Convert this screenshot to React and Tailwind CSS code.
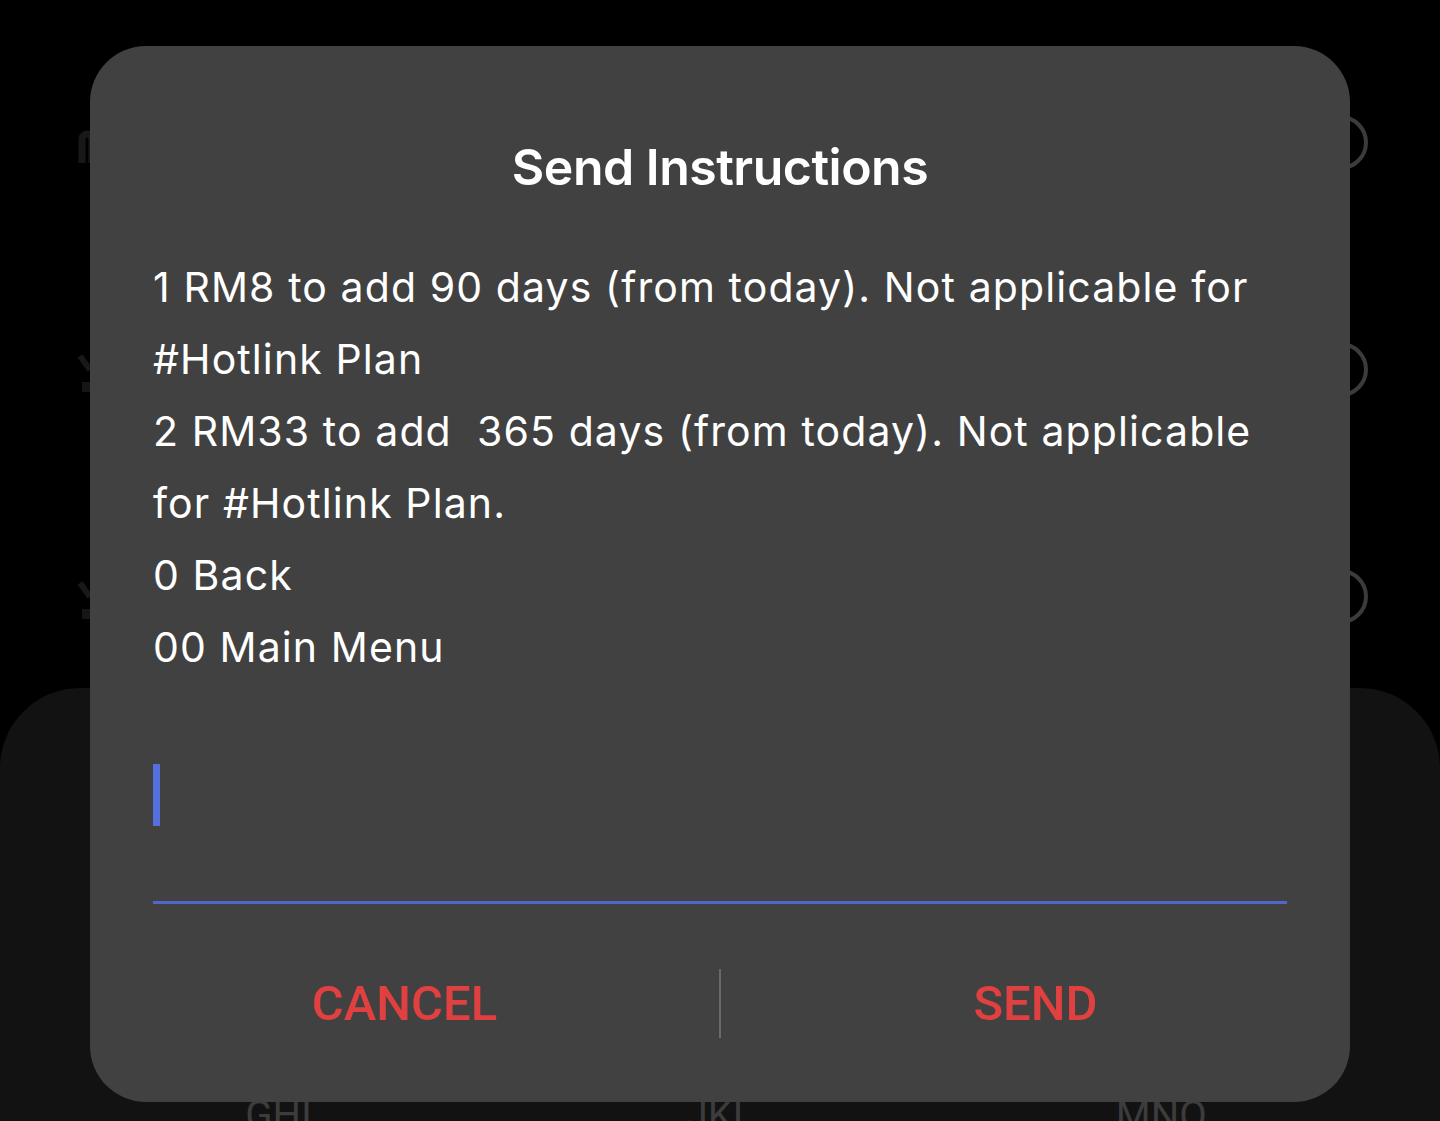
import React from "react";

const bodyLines = [
  "1 RM8 to add 90 days (from today). Not applicable for",
  "#Hotlink Plan",
  "2 RM33 to add  365 days (from today). Not applicable",
  "for #Hotlink Plan.",
  "0 Back",
  "00 Main Menu",
];

function RowIconA() {
  return (
    <svg width="40" height="60" viewBox="0 0 40 60" className="block">
      <path d="M32 50 V26 a5 5 0 0 1 10 0 V50" fill="none" stroke="#181818" strokeWidth="7" />
    </svg>
  );
}

function RowIconB() {
  return (
    <svg width="40" height="60" viewBox="0 0 40 60" className="block">
      <path d="M30 16 L40 30" fill="none" stroke="#181818" strokeWidth="6" />
      <rect x="32" y="42" width="8" height="10" fill="#161616" />
    </svg>
  );
}

function Circle() {
  return <div className="w-[55px] h-[55px] rounded-full border-[4px] border-[#3b3b3b]" />;
}

export default function App() {
  return (
    <div className="relative w-[1440px] h-[1121px] bg-black overflow-hidden" style={{ fontFamily: "Inter, 'Liberation Sans', sans-serif" }}>
      {/* background list */}
      <div className="flex flex-col pt-[115px] gap-[172px] pl-[50px] pr-[72px]">
        <div className="flex items-center justify-between h-[55px]">
          <RowIconA />
          <Circle />
        </div>
        <div className="flex items-center justify-between h-[55px]">
          <RowIconB />
          <Circle />
        </div>
        <div className="flex items-center justify-between h-[55px]">
          <RowIconB />
          <Circle />
        </div>
      </div>

      {/* keypad panel */}
      <div className="mt-[64px] h-[500px] bg-[#121212] rounded-t-[80px] px-[58px]">
        <div className="grid grid-cols-3 pt-[408px]">
          {["GHI", "JKL", "MNO"].map((t) => (
            <div key={t} className="text-center text-[40px] leading-[40px] text-[#3c3c3c]" style={{ fontFamily: "Roboto, sans-serif" }}>
              {t}
            </div>
          ))}
        </div>
      </div>

      {/* dialog */}
      <div className="absolute left-[90px] top-[46px] w-[1260px] h-[1056px] rounded-[56px] bg-[#414141] flex flex-col">
        <div className="px-[63px] flex flex-col">
          <div className="pt-[91px] text-center text-white font-semibold text-[50px] leading-[60px] tracking-[-0.5px]">
            Send Instructions
          </div>
          <div className="mt-[54px] text-white text-[41px] leading-[72px] tracking-[1.1px]">
            {bodyLines.map((l, i) => (
              <div key={i} className="whitespace-pre">{l}</div>
            ))}
          </div>
          <div className="mt-[81px] w-[7px] h-[62px] bg-[#5570dc]" />
          <div className="mt-[75px] h-[3px] bg-[#5066cf]" />
        </div>
        <div className="mt-[65px] flex items-center h-[69px]">
          <div className="flex-1 text-center text-[#e0403f] text-[49px] leading-[69px] font-medium" style={{ fontFamily: "Roboto, sans-serif" }}>
            CANCEL
          </div>
          <div className="w-[2px] h-[69px] bg-[#6a6a6a]" />
          <div className="flex-1 text-center text-[#e0403f] text-[49px] leading-[69px] font-medium" style={{ fontFamily: "Roboto, sans-serif" }}>
            SEND
          </div>
        </div>
      </div>
    </div>
  );
}
